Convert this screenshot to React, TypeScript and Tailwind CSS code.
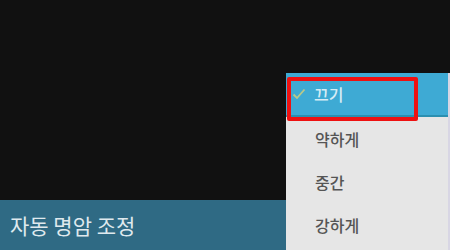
import React from "react";

const items = ["끄기", "약하게", "중간", "강하게"];

export default function App() {
  const font = { fontFamily: '"Noto Sans CJK KR", "Noto Sans", sans-serif' };
  return (
    <div
      className="relative w-[450px] h-[250px] bg-[#111111] overflow-hidden flex flex-col justify-end"
      style={font}
    >
      <div className="h-[50px] bg-[#2f6a84] flex items-center pl-[10px]">
        <span className="text-[21px] text-[#dfe9ee] leading-none">자동 명암 조정</span>
      </div>

      <div className="absolute left-[286px] top-[73px] w-[164px] bottom-0 bg-[#e6e6e6] border-r-2 border-[#d8d6e4] flex flex-col">
        {items.map((label, i) =>
          i === 0 ? (
            <div
              key={label}
              className="h-[44px] bg-[#3eaad4] border-b-[2px] border-[#2b8fb0] flex items-center pl-[6px] gap-[8px]"
            >
              <svg width="14" height="12" viewBox="0 0 14 12" fill="none">
                <path d="M1.5 6.5 L5 10 L12.5 1.5" stroke="#b9c98a" strokeWidth="1.8" />
              </svg>
              <span className="text-[16px] font-medium text-[#d6ecf5]">{label}</span>
            </div>
          ) : (
            <div key={label} className="h-[43px] flex items-center pl-[29px]">
              <span className="text-[16px] font-medium text-[#555555]">{label}</span>
            </div>
          )
        )}
      </div>

      <div className="absolute left-[287px] top-[77px] w-[131px] h-[44px] border-[4px] border-[#ee1111] rounded-[2px]" />
    </div>
  );
}
